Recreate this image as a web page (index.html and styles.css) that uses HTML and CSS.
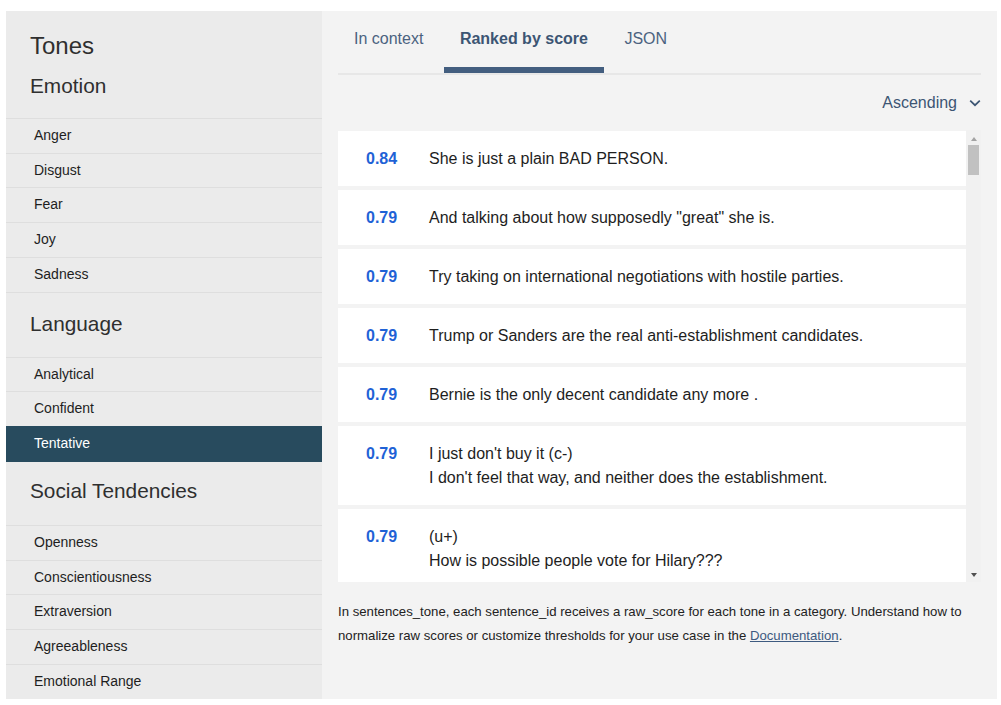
FILE: index.html
```html
<!DOCTYPE html>
<html lang="en">
<head>
<meta charset="utf-8">
<title>Tones</title>
<link rel="stylesheet" href="styles.css">
</head>
<body>
<div class="app">
  <aside class="sidebar">
    <h1 class="title">Tones</h1>
    <h2 class="section-head first">Emotion</h2>
    <ul class="tone-list">
      <li class="tone">Anger</li>
      <li class="tone">Disgust</li>
      <li class="tone">Fear</li>
      <li class="tone">Joy</li>
      <li class="tone">Sadness</li>
    </ul>
    <h2 class="section-head">Language</h2>
    <ul class="tone-list no-end">
      <li class="tone">Analytical</li>
      <li class="tone">Confident</li>
      <li class="tone active">Tentative</li>
    </ul>
    <h2 class="section-head after-active">Social Tendencies</h2>
    <ul class="tone-list">
      <li class="tone">Openness</li>
      <li class="tone">Conscientiousness</li>
      <li class="tone">Extraversion</li>
      <li class="tone">Agreeableness</li>
      <li class="tone">Emotional Range</li>
    </ul>
  </aside>
  <main class="panel">
    <nav class="tabs">
      <span class="tab">In context</span>
      <span class="tab active">Ranked by score</span>
      <span class="tab">JSON</span>
    </nav>
    <div class="sort-row">
      <span class="sort-label">Ascending</span>
      <svg class="chevron" width="12" height="8" viewBox="0 0 12 8"><path d="M1.2 1.6 L6 6.2 L10.8 1.6" fill="none" stroke="#3c5573" stroke-width="1.7"/></svg>
    </div>
    <div class="results">
      <div class="cards">
        <div class="card"><span class="score">0.84</span><div class="sentence">She is just a plain BAD PERSON.</div></div>
        <div class="card"><span class="score">0.79</span><div class="sentence">And talking about how supposedly "great" she is.</div></div>
        <div class="card"><span class="score">0.79</span><div class="sentence">Try taking on international negotiations with hostile parties.</div></div>
        <div class="card"><span class="score">0.79</span><div class="sentence">Trump or Sanders are the real anti-establishment candidates.</div></div>
        <div class="card"><span class="score">0.79</span><div class="sentence">Bernie is the only decent candidate any more .</div></div>
        <div class="card"><span class="score">0.79</span><div class="sentence">I just don't buy it (c-)<br>I don't feel that way, and neither does the establishment.</div></div>
        <div class="card"><span class="score">0.79</span><div class="sentence">(u+)<br>How is possible people vote for Hilary???</div></div>
      </div>
      <div class="scrollbar" aria-hidden="true">
        <div class="sb-button"><span class="arrow-up"></span></div>
        <div class="sb-track"><div class="sb-thumb"></div></div>
        <div class="sb-button"><span class="arrow-down"></span></div>
      </div>
    </div>
    <p class="note">In sentences_tone, each sentence_id receives a raw_score for each tone in a category. Understand how to normalize raw scores or customize thresholds for your use case in the <a href="#" class="doc-link">Documentation</a>.</p>
  </main>
</div>
</body>
</html>
```

FILE: styles.css
```css
* { box-sizing: border-box; }

html, body {
  margin: 0;
  padding: 0;
  background: #ffffff;
  font-family: "Liberation Sans", Arial, sans-serif;
}

.app {
  margin: 11px 4px 0 6px;
  height: 688px;
  display: grid;
  grid-template-columns: 316px 1fr;
  overflow: hidden;
}

/* Sidebar */
.sidebar {
  background: #ebebeb;
  color: #222;
}

.title {
  margin: 0;
  padding: 22px 24px 0;
  font-size: 24px;
  line-height: 26px;
  font-weight: normal;
  color: #2f2f2f;
}

.section-head {
  margin: 0;
  padding: 19.5px 24px 20.5px;
  font-size: 20.8px;
  line-height: 24px;
  font-weight: normal;
  color: #2f2f2f;
}

.section-head.first {
  padding-top: 15px;
  padding-bottom: 20px;
}

.section-head.after-active {
  padding-top: 17.5px;
  padding-bottom: 21.5px;
}

.tone-list {
  list-style: none;
  margin: 0;
  padding: 0;
  border-bottom: 1px solid #dedede;
}

.tone-list.no-end {
  border-bottom: none;
}

.tone {
  border-top: 1px solid #dedede;
  padding: 8px 0 8.95px 28px;
  font-size: 14px;
  line-height: 16.8px;
  color: #1e1e1e;
}

.tone.active {
  background: #284b5e;
  color: #ffffff;
  border-top-color: #284b5e;
  padding-bottom: 9.95px;
}

/* Right panel */
.panel {
  background: #f3f3f3;
  padding: 0 16px;
  display: flex;
  flex-direction: column;
  min-width: 0;
}

.tabs {
  display: flex;
  gap: 4.5px;
  border-bottom: 2px solid #e7e7e7;
}

.tab {
  padding: 18px 16px;
  font-size: 16px;
  line-height: 20px;
  color: #4b6280;
  border-bottom: 6px solid transparent;
}

.tab.active {
  font-weight: bold;
  color: #3c5573;
  border-bottom-color: #435e7f;
}

.sort-row {
  display: flex;
  justify-content: flex-end;
  align-items: center;
  padding: 18px 0 17px;
  height: 55px;
}

.sort-label {
  font-size: 16px;
  line-height: 20px;
  color: #3c5573;
}

.chevron {
  margin-left: 12px;
  display: block;
}

.results {
  height: 452px;
  display: flex;
}

.cards {
  flex: 1;
  min-width: 0;
  overflow: hidden;
  padding-top: 1px;
}

.card {
  background: #ffffff;
  margin-bottom: 4px;
  padding: 16px 16px 15px 28px;
  display: grid;
  grid-template-columns: 63px 1fr;
  font-size: 16px;
  line-height: 24px;
  color: #1e1e1e;
}

.score {
  font-weight: bold;
  color: #1f62d6;
}

/* drawn scrollbar of the result list */
.scrollbar {
  width: 15px;
  background: #f1f1f1;
  display: flex;
  flex-direction: column;
}

.sb-button {
  height: 15px;
  display: flex;
  align-items: center;
  justify-content: center;
}

.arrow-up {
  width: 0;
  height: 0;
  border-left: 3.5px solid transparent;
  border-right: 3.5px solid transparent;
  border-bottom: 4px solid #a3a3a3;
  margin-top: 2px;
}

.arrow-down {
  width: 0;
  height: 0;
  border-left: 3.5px solid transparent;
  border-right: 3.5px solid transparent;
  border-top: 4px solid #505050;
  margin-top: 1px;
}

.sb-track {
  flex: 1;
  padding: 0 2px;
}

.sb-thumb {
  height: 30px;
  background: #c1c1c1;
}

.note {
  margin: 18px 0 0;
  font-size: 13.2px;
  line-height: 24px;
  color: #222;
}

.doc-link {
  color: #3d5a80;
  text-decoration: underline;
}
```
